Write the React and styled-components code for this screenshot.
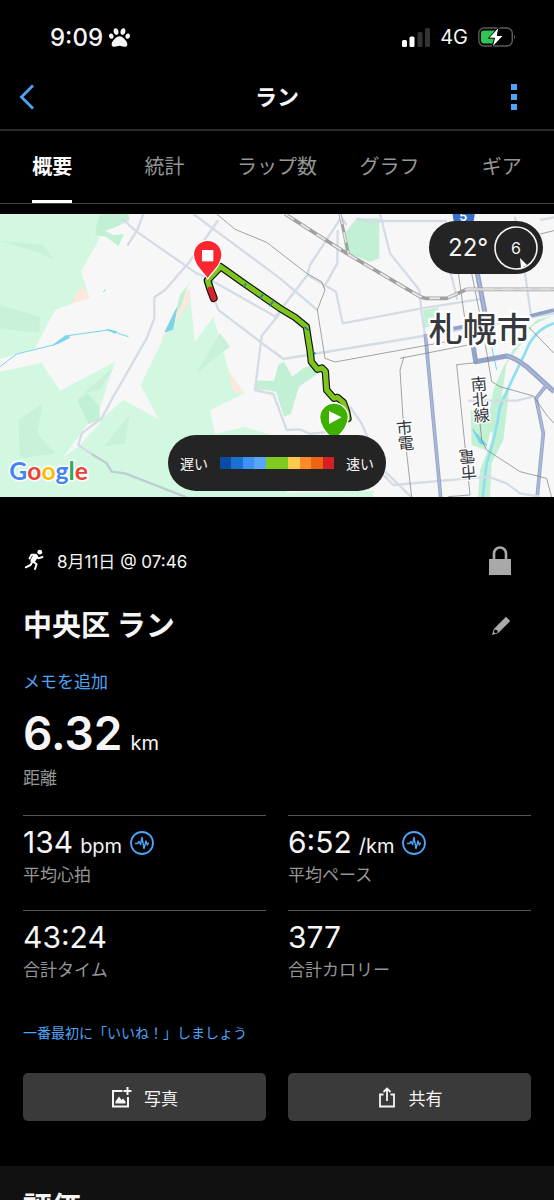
import React, { useState } from "react"
import styled, { createGlobalStyle } from "styled-components"
import { FaPaw } from "react-icons/fa"

const GlobalStyles = createGlobalStyle`
  * {
    box-sizing: border-box;
  }
  body {
    margin: 0;
    background: #000;
    color: #f5f5f5;
    font-family: Inter, "Noto Sans CJK JP", sans-serif;
  }
  button {
    padding: 0;
    border: 0;
    background: none;
    color: inherit;
    font: inherit;
    cursor: pointer;
  }
  svg {
    display: block;
  }
`

const AppStyles = styled.div`
  height: 100vh;
  overflow: hidden;
`

const StatusBar = styled.div`
  display: flex;
  align-items: center;
  justify-content: space-between;
  height: 64px;
  padding: 10px 38px 0 50px;
`

const StatusGroup = styled.div`
  display: flex;
  align-items: center;
  gap: ${props => props.$gap}px;
`

const Clock = styled.span`
  font-size: 24px;
  font-weight: 500;
`

const Network = styled.span`
  font-size: 20px;
`

const NavBar = styled.header`
  display: grid;
  grid-template-columns: 48px 1fr 48px;
  align-items: center;
  height: 67px;
  padding: 0 16px;
  border-bottom: 2px solid #2c2c2c;

  h1 {
    margin: 0;
    font-size: 22px;
    line-height: 32px;
    font-weight: 700;
    text-align: center;
  }
`

const NavButton = styled.button`
  display: flex;
  justify-content: ${props => (props.$end ? "flex-end" : "flex-start")};
  color: #4fa3f7;
`

const Tabs = styled.nav`
  display: grid;
  grid-template-columns: repeat(5, 1fr);
  justify-items: center;
  height: 73px;
  margin: 0 -4px;
  border-bottom: 1px solid #444;
`

const Tab = styled.button`
  height: 72px;
  border-bottom: 3px solid ${props => (props.$active ? "#fff" : "transparent")};
  color: ${props => (props.$active ? "#fff" : "#969696")};
  font-size: 20px;
  font-weight: ${props => (props.$active ? 700 : 400)};
  white-space: nowrap;
`

const MapStyles = styled.section`
  position: relative;
  height: 283px;
  margin-top: 10px;
  overflow: hidden;

  .map {
    width: 100%;
    height: 100%;
  }
`

const Weather = styled.div`
  position: absolute;
  top: 7px;
  right: 11px;
  display: flex;
  align-items: center;
  justify-content: space-between;
  width: 114px;
  height: 53px;
  padding: 0 5px 0 19px;
  border-radius: 27px;
  background: #242424;
  font-size: 24px;
`

const Legend = styled.div`
  position: absolute;
  bottom: 6px;
  left: 50%;
  display: flex;
  align-items: center;
  justify-content: space-between;
  width: 218px;
  height: 56px;
  padding: 0 12px;
  border-radius: 28px;
  background: #242424;
  font-size: 14px;
  transform: translateX(-50%);
`

const Scale = styled.div`
  display: grid;
  grid-template-columns: repeat(10, 1fr);
  width: 114px;
  height: 12px;
`

const Swatch = styled.span`
  background: ${props => props.$color};
`

const Details = styled.main`
  padding: 43px 23px 45px;
`

const Row = styled.div`
  display: flex;
  align-items: center;
  justify-content: space-between;
  height: ${props => props.$height}px;
  padding-right: 20px;
`

const DateLine = styled.div`
  display: flex;
  align-items: center;
  gap: 12px;
  font-size: 17px;
`

const Title = styled.h2`
  margin: 0;
  font-size: 29px;
  line-height: 40px;
  font-weight: 700;
`

const TextLink = styled.a`
  display: block;
  color: #4fa3f7;
  font-size: ${props => (props.$small ? 14 : 17)}px;
  line-height: 22px;
  text-decoration: none;
`

const Distance = styled.div`
  margin: 12px 0 24px;

  p {
    display: flex;
    align-items: baseline;
    gap: 8px;
    height: 60px;
    margin: 0;
    line-height: 56px;
  }
  strong {
    font-size: 46px;
    font-weight: 600;
  }
  span {
    font-size: 20px;
  }
`

const Label = styled.div`
  color: #969696;
  font-size: 17px;
  line-height: 26px;
`

const StatGrid = styled.div`
  display: grid;
  grid-template-columns: 1fr 1fr;
  column-gap: 22px;
`

const Stat = styled.div`
  height: 95px;
  padding-top: 8px;
  border-top: 1px solid #555;

  .value {
    display: flex;
    align-items: baseline;
    height: 38px;
    font-size: 30px;
    line-height: 36px;
  }
  .unit {
    margin-left: 7px;
    font-size: 20px;
  }
  svg {
    align-self: center;
    margin-left: 8px;
  }
`

const Social = styled.div`
  margin-top: 17px;
`

const Actions = styled.div`
  display: grid;
  grid-template-columns: 1fr 1fr;
  gap: 22px;
  margin-top: 29px;
`

const ActionButton = styled.button`
  display: flex;
  align-items: center;
  justify-content: center;
  gap: 12px;
  height: 48px;
  border-radius: 5px;
  background: #3a3a3a;
  font-size: 17px;
`

const Rating = styled.section`
  padding: 22px 23px;
  background: #111;
`

const tabs = ["概要", "統計", "ラップ数", "グラフ", "ギア"]

const paceColors = [
  "#084ca5",
  "#1b72d2",
  "#3c93f5",
  "#58a5fb",
  "#80cb20",
  "#80cb20",
  "#fecb4c",
  "#fd8b28",
  "#ed6513",
  "#d91f26",
]

const stats = [
  { value: "134", unit: "bpm", label: "平均心拍", graph: true },
  { value: "6:52", unit: "/km", label: "平均ペース", graph: true },
  { value: "43:24", label: "合計タイム" },
  { value: "377", label: "合計カロリー" },
]

const SignalIcon = () => (
  <svg width="28" height="19" viewBox="0 0 28 19" fill="#fff">
    <rect x="0" y="12" width="5" height="7" rx="1.5" />
    <rect x="7.5" y="8.5" width="5" height="10.5" rx="1.5" />
    <rect x="15.5" y="4" width="5" height="15" rx="1.5" fill="#333" />
    <rect x="23" y="0" width="5" height="19" rx="1.5" fill="#333" />
  </svg>
)

const BatteryIcon = () => (
  <svg width="38" height="22" viewBox="0 0 38 22">
    <rect x="0.8" y="2" width="33.5" height="18" rx="5.5" fill="none" stroke="#5c5c5c" strokeWidth="1.4" />
    <path d="M6 4.500h12v13H6a3 3 0 0 1-3-3V7.500a3 3 0 0 1 3-3z" fill="#30c655" />
    <path d="M36 8.500q2 2.500 0 5z" fill="#5c5c5c" />
    <path d="M21 0.800L10.500 12.200h6L14 21.500L25.500 9.500h-6.200z" fill="#fff" stroke="#000" strokeWidth="1" />
  </svg>
)

const RunnerIcon = () => (
  <svg width="22" height="22" viewBox="0 0 22 22" fill="none" stroke="#fff" strokeWidth="2" strokeLinecap="round" strokeLinejoin="round">
    <circle cx="16.800" cy="3.200" r="2.400" fill="#fff" stroke="none" />
    <path d="M6.500 9.500L8.500 5.800L12.500 5.800L15.300 9.300L19.500 8" strokeWidth="1.900" />
    <path d="M12.300 7.500L10 11.500" strokeWidth="5" />
    <path d="M9.500 12.500L7.500 16L2.800 18.300" />
    <path d="M10 12.500L13.600 15.300L12 20" />
  </svg>
)

const LockIcon = () => (
  <svg width="22" height="29" viewBox="0 0 22 29">
    <path d="M5 14V7.500a6 6 0 0 1 12 0V14" fill="none" stroke="#a9a9a9" strokeWidth="2.600" />
    <rect y="13" width="22" height="16" fill="#a9a9a9" />
  </svg>
)

const PencilIcon = () => (
  <svg width="20" height="20" viewBox="0 0 20 20" fill="#a9a9a9">
    <path d="M15 0.800L19.200 5L7 17.200L1 19L2.800 13z" />
    <path d="M3.600 13.600L6.400 14.200L6.800 16.400L4.200 17.200L2.900 15.900z" fill="#000" />
  </svg>
)

const GraphIcon = () => (
  <svg width="24" height="24" viewBox="0 0 24 24" fill="none" stroke="#4fa3f7" strokeLinejoin="round" strokeLinecap="round">
    <circle cx="12" cy="12" r="11" strokeWidth="1.800" />
    <path d="M5.500 12.500h2l1.500-2 1.500 3L12 6.500l2 11 2-7.500 1.300 4 1.200-2" strokeWidth="1.400" />
  </svg>
)

const PhotoIcon = () => (
  <svg width="21" height="21" viewBox="0 0 21 21" fill="none" stroke="#f5f5f5" strokeWidth="2">
    <path d="M11.500 4H2V19.500H17V10" />
    <path d="M16.500 0V8M12.500 4H20.500" />
    <path d="M4.500 16.500V14.500L8 9.500L10.500 13L12 11.500L14.500 14.500V16.500z" fill="#f5f5f5" stroke="none" />
  </svg>
)

const ShareIcon = () => (
  <svg width="20" height="21" viewBox="0 0 20 21" fill="none" stroke="#f5f5f5" strokeWidth="1.800">
    <path d="M6.500 7.500H3V19.500H17V7.500H13.500" />
    <path d="M10 14V2M6.500 5L10 1.500L13.500 5" />
  </svg>
)

const routePath =
  "M626 208L662 170L735 222L840 295L885 322L919 350L925 390L930 420L934 455L952 478L966 474L976 484L980 540L1002 565L1012 562L1030 577L1040 605L1044 626"

// 1662 x 849 drawing units, three to a pixel at phone width
const RouteMap = () => (
  <svg className="map" viewBox="0 12 1662 849" preserveAspectRatio="xMidYMid slice" role="img" aria-label="ルート">
    <rect y="12" width="1662" height="850" fill="#f7f7f8" />

    <g fill="#d2f8e1">
      <path d="M0 12H300L285 75L300 82L243 185L268 262L165 300L105 415L0 447z" />
      <path d="M0 485L125 458L180 542L345 455L296 605L300 630L370 570L475 627L422 525L490 385L545 290L568 235L585 395L640 320L690 495L735 550L630 600L645 672L735 650L860 690L860 848L1120 842V862H0z" />
    </g>
    <path d="M300 590L190 742L235 710L300 640z" fill="#f7f7f8" />
    <g fill="#fce9dc">
      <path d="M243 226L272 264L215 280z" />
      <path d="M566 235L568 280L480 398L530 290z" />
      <path d="M684 480L700 545L735 550z" />
    </g>
    <g fill="#c2f0d4">
      <path d="M300 12H385L388 30L350 50L315 62L340 76L372 72L355 108L318 80L285 76L290 45z" />
      <path d="M232 570L262 548L298 590L300 630L265 642z" />
      <path d="M575 210L540 255L525 315L545 285L560 235z" />
      <path d="M765 512H822L835 465L852 455L877 500L910 475L935 465L955 490L897 530L872 612L852 620L828 545L800 540L765 538z" />
      <path d="M1070 25H1138V145L1110 156L1035 125L1030 75z" />
      <path d="M1270 300L1315 292L1320 340L1270 355z" />
      <path d="M1662 315L1600 345L1565 400L1520 460L1505 560L1482 670L1460 660L1480 540L1510 470L1565 375L1610 330z" />
      <path d="M1412 600L1482 615L1458 720L1415 705z" />
      <path d="M1482 600L1530 520L1510 690L1475 760L1470 862H1434L1440 780L1475 690z" />
    </g>
    <g fill="#c9f0d8">
      <path d="M0 92L130 105L163 150L120 130z" />
      <path d="M0 285L120 320L118 368L0 357z" />
      <path d="M55 630L128 580L112 670L165 730L60 745z" />
      <path d="M590 490L660 370L690 410L650 440z" />
      <path d="M310 710L388 615L375 700z" />
      <path d="M342 470L250 550L300 540z" />
    </g>

    <g fill="none" stroke="#78d5e8" strokeWidth="3">
      <path d="M0 470L50 432L160 405L195 378L325 360L385 380" />
      <path d="M160 405L200 378L210 382L175 400zM320 358L350 365L345 370z" fill="#78d5e8" />
      <path d="M530 295L495 366L518 358z" fill="#78d5e8" />
      <path d="M310 246L316 238" />
      <path d="M1662 340Q1600 360 1575 430Q1540 500 1500 590Q1485 690 1460 760L1448 862" stroke="#8edff0" strokeWidth="8" />
      <path d="M1418 658L1460 705L1440 700z" fill="#78d5e8" />
      <path d="M1475 410L1490 480" />
    </g>

    <g fill="none" stroke="#d5dce5" strokeWidth="7" strokeLinejoin="round">
      <path d="M365 25L410 65L590 190L615 200L830 322" />
      <path d="M430 12L412 60L382 107" />
      <path d="M580 12L840 205L952 300" />
      <path d="M655 30L565 160L495 240L463 262V325L440 385L340 560L305 625L245 670L235 705L275 732" />
      <path d="M275 732L320 760L335 785L375 790L560 862" stroke="#c0cbd6" />
      <path d="M640 260L655 300L840 440" />
      <path d="M840 310L785 378L765 540L820 552L860 660L900 658L930 672L990 665" />
      <path d="M1025 20L930 165L922 195L822 325" />
      <path d="M1040 45L1018 12" />
      <path d="M1013 60L1012 160L970 235" />
      <path d="M922 195L1008 245L1028 340L1265 295L1455 265" />
      <path d="M1140 12L1170 130L1258 240L1265 310L1276 380" />
      <path d="M1070 25L1100 33H1340" />
      <path d="M822 425L850 447L1270 378L1662 310" />
      <path d="M1350 180L1372 270M1545 20L1575 190L1592 310M1620 30L1662 22" />
      <path d="M1050 590L1085 640L1140 770L1235 862" />
      <path d="M1140 785L1180 825L1465 800L1520 820L1560 850L1620 860" />
      <path d="M1405 572H1550L1600 560" />
    </g>

    <g fill="none" stroke="#93a3c8" strokeWidth="11" strokeLinejoin="round">
      <path d="M1276 372L1322 862" />
      <path d="M1432 190L1460 335M1420 410L1427 455L1520 438Q1540 440 1580 470L1662 545" strokeWidth="15" />
      <path d="M1360 356L1390 350M1590 318L1662 300" />
      <path d="M1640 525L1608 565L1630 670L1612 855" />
    </g>
    <g fill="none" stroke="#aab7d6" strokeWidth="6">
      <path d="M1276 372L1322 862M1432 190L1460 335M1520 438Q1540 440 1580 470L1662 545M1640 525L1608 565L1630 670L1612 855" />
    </g>

    <g fill="none" stroke="#777" strokeWidth="2">
      <path d="M650 12L705 58L800 97L920 190L965 215L975 240L952 300L975 445L1005 456L1340 395M1200 445L1420 402" />
      <path d="M1212 440L1200 480L1210 640L1235 862" />
      <path d="M1430 458L1370 464L1410 855L1345 860" />
      <path d="M1375 190L1395 330M1415 190L1445 340L1475 515L1500 530L1600 558L1640 615L1662 640" />
      <path d="M1440 640L1445 690L1460 720L1560 785L1640 805L1655 862" />
      <path d="M1580 345L1662 430M1620 72L1662 62" />
    </g>

    <g fill="none" strokeLinejoin="round">
      <path d="M855 12L1040 130L1260 260L1275 265H1340L1400 238H1662" stroke="#a0a0a0" strokeWidth="11" />
      <path d="M1020 12L1045 130" stroke="#a0a0a0" strokeWidth="9" />
      <path d="M855 12L1040 130L1260 260L1275 265H1340L1400 238H1662" stroke="#e6e6e6" strokeWidth="6" strokeDasharray="32 24" />
      <path d="M1020 12L1045 130" stroke="#e6e6e6" strokeWidth="5" strokeDasharray="32 24" />
      <path d="M1400 238H1662" stroke="#dcdcdc" strokeWidth="7" />
    </g>

    <g textAnchor="middle" fontFamily='"Noto Sans CJK JP", sans-serif' fill="#36393d" stroke="#fff" paintOrder="stroke" strokeLinejoin="round">
      <text x="1439" y="395" fontSize="102" fontWeight="500" strokeWidth="14">札幌市</text>
      <g fontSize="49" strokeWidth="8">
        <text transform="translate(1215 671) rotate(-5)">
          <tspan x="0">市</tspan>
          <tspan x="0" dy="47">電</tspan>
        </text>
        <text transform="translate(1438 540) rotate(-5)">
          <tspan x="0">南</tspan>
          <tspan x="0" dy="47">北</tspan>
          <tspan x="0" dy="47">線</tspan>
        </text>
        <text transform="translate(1404 768) rotate(175)">
          <tspan x="0">市</tspan>
          <tspan x="0" dy="47">電</tspan>
        </text>
      </g>
    </g>

    <path d="M1358 12H1424Q1422 40 1412 56H1370Q1360 40 1358 12z" fill="#356fc9" />
    <text x="1390" y="34" textAnchor="middle" fontSize="38" fontWeight="600" fill="#fff">5</text>

    <g fill="none" strokeLinejoin="round" strokeLinecap="round">
      <path d={routePath} stroke="#111" strokeWidth="22" />
      <path d="M623 212L630 235L641 264" stroke="#111" strokeWidth="24" />
      <path d={routePath} stroke="#7ec61e" strokeWidth="15" />
      <path d="M623 212L630 235" stroke="#7ec61e" strokeWidth="16" />
      <path d="M631 238L641 264" stroke="#d8232a" strokeWidth="17" />
      <path d="M737 222L732 230M788 254L781 264M818 276L810 287M915 352L925 360M940 426L945 430" stroke="#287f8c" strokeWidth="5" />
    </g>

    <g stroke="#fff" strokeWidth="4">
      <path d="M623 207C609 186 580 164 580 134A43 43 0 0 1 666 134C666 164 637 186 623 207z" fill="#fc2630" />
      <path d="M1002 696C988 675 959 653 959 622A43 43 0 0 1 1045 622C1045 653 1016 675 1002 696z" fill="#3eb000" />
    </g>
    <rect x="606" y="120" width="34" height="34" fill="#fff" />
    <path d="M987 603L1025 622L987 642z" fill="#fff" />

    <text x="28" y="811" fontFamily="Lato, sans-serif" fontSize="74" fontWeight="700" stroke="#fff" strokeWidth="9" paintOrder="stroke">
      <tspan fill="#4285f4">G</tspan>
      <tspan fill="#ea4335">o</tspan>
      <tspan fill="#fbbc05">o</tspan>
      <tspan fill="#4285f4">g</tspan>
      <tspan fill="#34a853">l</tspan>
      <tspan fill="#ea4335">e</tspan>
    </text>
  </svg>
)

export default function App() {
  const [activeTab, setActiveTab] = useState("概要")

  return (
    <AppStyles>
      <GlobalStyles />
      <StatusBar>
        <StatusGroup $gap={6}>
          <Clock>9:09</Clock>
          <FaPaw size={21} />
        </StatusGroup>
        <StatusGroup $gap={10}>
          <SignalIcon />
          <Network>4G</Network>
          <BatteryIcon />
        </StatusGroup>
      </StatusBar>

      <NavBar>
        <NavButton aria-label="戻る">
          <svg width="22" height="28" viewBox="0 0 22 28" fill="none" stroke="currentColor" strokeWidth="2.800">
            <path d="M17 2.500L5.500 14L17 25.500" />
          </svg>
        </NavButton>
        <h1>ラン</h1>
        <NavButton $end aria-label="メニュー">
          <svg width="30" height="28" viewBox="0 0 30 28" fill="currentColor">
            <path d="M3 1h6v6H3zM3 11h6v6H3zM3 21h6v6H3z" />
          </svg>
        </NavButton>
      </NavBar>

      <Tabs>
        {tabs.map(tab => (
          <Tab key={tab} $active={tab === activeTab} onClick={() => setActiveTab(tab)}>
            {tab}
          </Tab>
        ))}
      </Tabs>

      <MapStyles>
        <RouteMap />
        <Weather>
          <span>22°</span>
          <svg width="44" height="44" viewBox="0 0 44 44">
            <circle cx="22" cy="22" r="21" fill="none" stroke="#f5f5f5" strokeWidth="1.600" />
            <path d="M26 32L33 39L27 42z" fill="#fff" />
            <text x="22" y="28" textAnchor="middle" fontSize="16" fill="#f5f5f5">6</text>
          </svg>
        </Weather>
        <Legend>
          <span>遅い</span>
          <Scale>
            {paceColors.map((color, i) => (
              <Swatch key={i} $color={color} />
            ))}
          </Scale>
          <span>速い</span>
        </Legend>
      </MapStyles>

      <Details>
        <Row $height={40}>
          <DateLine>
            <RunnerIcon />
            <span>8月11日 @ 07:46</span>
          </DateLine>
          <LockIcon />
        </Row>
        <Row $height={91}>
          <Title>中央区 ラン</Title>
          <button aria-label="編集">
            <PencilIcon />
          </button>
        </Row>
        <TextLink href="#memo">メモを追加</TextLink>

        <Distance>
          <p>
            <strong>6.32</strong>
            <span>km</span>
          </p>
          <Label>距離</Label>
        </Distance>

        <StatGrid>
          {stats.map(stat => (
            <Stat key={stat.label}>
              <div className="value">
                {stat.value}
                {stat.unit && <span className="unit">{stat.unit}</span>}
                {stat.graph && <GraphIcon />}
              </div>
              <Label>{stat.label}</Label>
            </Stat>
          ))}
        </StatGrid>

        <Social>
          <TextLink $small href="#like">一番最初に「いいね！」しましょう</TextLink>
        </Social>

        <Actions>
          <ActionButton>
            <PhotoIcon />
            写真
          </ActionButton>
          <ActionButton>
            <ShareIcon />
            共有
          </ActionButton>
        </Actions>
      </Details>

      <Rating>
        <Title>評価</Title>
      </Rating>
    </AppStyles>
  )
}
